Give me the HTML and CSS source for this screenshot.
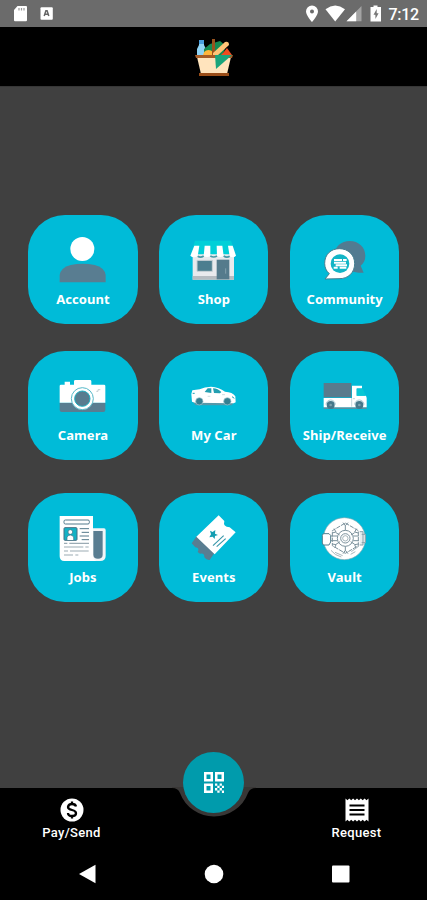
FILE: index.html
```html
<!DOCTYPE html>
<html lang="en">
<head>
<meta charset="utf-8">
<title>Home</title>
<link rel="stylesheet" href="styles.css">
</head>
<body>
<div class="phone">
  <div class="status">
    <svg class="status-left" viewBox="0 0 60 27">
      <path d="M17.5 6H26q1 0 1 1V20q0 1.3-1 1.3H15q-1 0-1-1V10z" fill="#fff"/>
      <path d="M19 8v2.5M21.5 8v2.5M24 8v2.5" stroke="#999" stroke-width="1.2"/>
      <rect x="40.5" y="7.3" width="12.3" height="12.4" rx="1" fill="#fff"/>
      <path d="M44.200 16l1.700-5.200h1.200l1.700 5.200M44.800 14.300h3.400" fill="none" stroke="#666" stroke-width="1.500"/>
    </svg>
    <div class="status-right">
      <svg class="status-icons" viewBox="0 0 80 27">
        <path fill-rule="evenodd" d="M7 5.5a6 6 0 0 0-6 6C1 15.500 7 22 7 22s6-6.500 6-10.500a6 6 0 0 0-6-6zm0 4a2 2 0 1 1 0 4 2 2 0 0 1 0-4z" fill="#fff"/>
        <path d="M20.500 9.200Q30.200 2 40 9.200L30.200 21.500z" fill="#fff"/>
        <path d="M56.500 6V21.300H41.500z" fill="#a3a3a3"/>
        <path d="M51.200 11.400V21.300H41.500z" fill="#fff"/>
        <path d="M68.500 5.500h4V7H76v14.500H65.500V7h3z" fill="#fff"/>
        <path d="M71.700 9l-3.200 5.800h1.900v4.200l3.200-5.800h-1.900z" fill="#777"/>
      </svg>
      <span class="clock">7:12</span>
    </div>
  </div>
  <header class="header">
    <svg class="basket" viewBox="0 0 40 40">
      <path d="M5 3h5v5l2 4v8H3v-8l2-4z" fill="#8fd3f5"/>
      <path d="M5 3h5v4H5z" fill="#4a9fe0"/>
      <path d="M10 12l6-5 10-3 6 5-4 11H10z" fill="#138a52"/>
      <path d="M9 20q0-7 5.500-7t6 7z" fill="#ffb63c"/>
      <path d="M18 2h3v17h-3z" fill="#98521e"/>
      <path d="M29 16l4-5 5 7H27z" fill="#ee4c20"/>
      <path d="M19 16L31 5q4-1 4 3L23 19h-4z" fill="#ffc477"/>
      <path d="M3 20h34l-4 17H7z" fill="#ffe4bd"/>
      <path d="M1 18h38l-1 3H2z" fill="#a65b26"/>
      <path d="M21 18h17L22 32z" fill="#19a47b"/>
      <path d="M5 36h30v3H5z" fill="#9a4d18"/>
    </svg>
  </header>
  <main class="main">
    <div class="row">
      <div class="tile">
        <svg class="icon" viewBox="115 84 150 156">
          <circle cx="188" cy="132" r="36" fill="#fff"/>
          <path d="M120 232v-22q3-22 33-30 36-7 72 0 30 8 33 30v22z" fill="#597d91"/>
        </svg>
        <span class="label">Account</span>
      </div>
      <div class="tile">
        <svg class="icon" viewBox="118 84 150 156">
          <path d="M136 107h108l15 46H122z" fill="#00d0d8"/>
          <path d="M129 148h124v76H129z" fill="#e9eaed"/>
          <path d="M129 213h124v11H129z" fill="#b6bcc1"/>
          <path d="M142 166h46v33h-46z" fill="#4c7e8f" stroke="#cad2d7" stroke-width="3"/>
          <path d="M201 164h38v59h-38z" fill="#557b8c"/>
          <path d="M228 190v16" stroke="#82a0ad" stroke-width="3"/>
          <path d="M134 122h15l-5 32q-14 6-22-2zM165 122h17v31q-10 6-20 0zM201 122h17l4 31q-10 6-20 0zM235 122h14l10 30q-8 8-19 2z" fill="#fff"/>
          <path d="M144 154q9 5 18-1M182 153q10 6 20 0M222 153q9 6 18 1" fill="none" stroke="#4799a7" stroke-width="5"/>
        </svg>
        <span class="label">Shop</span>
      </div>
      <div class="tile">
        <svg class="icon" viewBox="121 84 150 156">
          <path d="M210 108c27 0 47 19 47 44 0 14-5 22-14 30l9 21q-24 1-37-6-50-5-50-47c0-26 20-42 45-42z" fill="#527b91"/>
          <path d="M179 131c26 0 46 18 46 45 0 27-20 46-47 45l-42 1 13-16q-14-12-14-31c0-27 19-44 44-44z" fill="#fff" stroke="#467f91" stroke-width="3"/>
          <circle cx="181" cy="176" r="28" fill="#12b5c6"/>
          <path d="M163 165h24M190 165h11M163 173h36M168 181h34M162 188h12M180 188h20" stroke="#fff" stroke-width="6"/>
        </svg>
        <span class="label">Community</span>
      </div>
    </div>
    <div class="row">
      <div class="tile">
        <svg class="icon" viewBox="115 87 150 156">
          <path d="M135 125h16v10h-16zM163 124q0-4 4-4h44q4 0 4 4v11h-52z" fill="#fff"/>
          <path d="M120 188h137v22q0 6-6 6H126q-6 0-6-6z" fill="#597d91"/>
          <path d="M124 134h129q4 0 4 4v50H120v-50q0-4 4-4z" fill="#fff"/>
          <circle cx="188" cy="176" r="33" fill="#fff" stroke="#55b8c8" stroke-width="3"/>
          <circle cx="188" cy="176" r="23" fill="#587c8f" stroke="#1dafc1" stroke-width="3"/>
          <path d="M230 154h5v-5h7" fill="none" stroke="#c3cdd2" stroke-width="3"/>
        </svg>
        <span class="label">Camera</span>
      </div>
      <div class="tile">
        <svg class="icon" viewBox="508 87 150 156">
          <path d="M520 186h122l-5 10H528z" fill="#5698a9"/>
          <path d="M518 151l22-3q15-8 34-8 24 1 42 15 23 1 31 14l1 18-6 3-116-2-9-3-2-23z" fill="#fff"/>
          <path d="M555 156l9-11h11v14zM580 145q15 1 25 11l-4 4-18-1z" fill="#239fb1"/>
          <path d="M564 169h8M607 164h9" stroke="#b4ccd2" stroke-width="2"/>
          <circle cx="539" cy="184" r="11" fill="#367f91" stroke="#a6c9d1" stroke-width="2"/>
          <circle cx="623" cy="184" r="11" fill="#367f91" stroke="#a6c9d1" stroke-width="2"/>
          <path d="M519 160h6M637 170l7 5" stroke="#199fb3" stroke-width="3"/>
        </svg>
        <span class="label">My Car</span>
      </div>
      <div class="tile">
        <svg class="icon" viewBox="331 87 150 156">
          <path d="M342 129h83v43h-83z" fill="#597b8d"/>
          <path d="M342 202h129v5H342z" fill="#598fa0"/>
          <path d="M342 174h85v-37h30v8h-16v22h28l2 7v28H342z" fill="#fff"/>
          <path d="M441 147h19l8 20h-27z" fill="#08c7d4"/>
          <path d="M426 174v26M430 176h6" stroke="#a9c2cc" stroke-width="2"/>
          <path d="M349 194a14 14 0 0 1 28 0M435 194a14 14 0 0 1 28 0" fill="none" stroke="#a9cbd4" stroke-width="3"/>
          <circle cx="363" cy="195" r="12" fill="#46778a"/>
          <circle cx="449" cy="195" r="12" fill="#46778a"/>
          <circle cx="363" cy="195" r="4" fill="#7da0ad"/>
          <circle cx="449" cy="195" r="4" fill="#7da0ad"/>
        </svg>
        <span class="label">Ship/Receive</span>
      </div>
    </div>
    <div class="row row-last">
      <div class="tile">
        <svg class="icon" viewBox="115 77 150 156">
          <path d="M215 129h38q5 0 5 5v77q0 16-17 16h-26z" fill="#f2f5f7"/>
          <path d="M221 137h28v71q0 12-14 12t-14-12z" fill="#597d91"/>
          <path d="M120 92h100v121q0 9 10 14h-96q-14 0-14-14z" fill="#fff"/>
          <rect x="133" y="104" width="76" height="12" rx="4" fill="#fff" stroke="#537a8c" stroke-width="3"/>
          <rect x="133" y="127" width="39" height="38" rx="3" fill="#13b2c5" stroke="#466f83" stroke-width="3"/>
          <circle cx="152" cy="140" r="7" fill="#fff" stroke="#466f83" stroke-width="2"/>
          <path d="M142 164v-9q10-12 20 0v9" fill="#fff" stroke="#466f83" stroke-width="2"/>
          <path d="M180 130h28M186 141h22M180 152h28M186 163h22" stroke="#54798b" stroke-width="3"/>
          <path d="M133 174h10M149 174h59M133 185h58M197 185h10M133 197h12M151 197h56M133 209h27M167 209h9" stroke="#9babb4" stroke-width="3.500"/>
        </svg>
        <span class="label">Jobs</span>
      </div>
      <div class="tile">
        <svg class="icon" viewBox="118 77 150 156">
          <path d="M142 151l52 52-14 21q-9 2-16-8 1-14-13-11l-7-5q7-12-7-14l-11-12z" fill="#597d91"/>
          <path d="M207 90l17 17q-5 18 16 19l18 15-63 66-55-53z" fill="#fff"/>
          <path d="M181 136l8 4 8-6-1 11 9 4-9 3-1 9-6-7-10 2 5-9z" fill="#159eb2"/>
          <path d="M190 181l32-30M201 184l27-24" stroke="#3a98aa" stroke-width="3.500"/>
        </svg>
        <span class="label">Events</span>
      </div>
      <div class="tile">
        <svg class="icon" viewBox="121 77 150 156">
          <circle cx="194" cy="160" r="63" fill="#fff" stroke="#82a9b4" stroke-width="2"/>
          <path d="M131 145h17l5 5v20l-5 9h-17l-3-6v-23z" fill="#fff" stroke="#527f8f" stroke-width="3"/>
          <path d="M240 139h10v40h-10M246 147h11v25h-11" fill="#e6edef" stroke="#89a1aa" stroke-width="3"/>
          <g fill="none" stroke="#7b919c" stroke-width="3">
            <path d="M197 113l39 23v45l-39 23-39-23v-45z" stroke-dasharray="13 3"/>
            <path d="M190 112l7 9 8-9M190 205l7-10 8 10M163 130l6 10-12 3M231 130l-6 10 11 3M158 176l11 2-4 10M236 176l-11 2 4 10"/>
            <circle cx="197" cy="159" r="24"/>
            <circle cx="197" cy="159" r="14"/>
            <circle cx="197" cy="159" r="8" stroke-width="2"/>
            <path d="M197 121v14M197 183v12M169 142l11 7M225 142l-11 7M169 177l12-8M225 177l-12-8M153 152h20M153 166h20M221 152h16M221 166h16"/>
            <path d="M154 195q11 15 31 20M166 201l23 10M215 199l23-17M213 207l14-8" stroke="#a9b7bd"/>
          </g>
        </svg>
        <span class="label">Vault</span>
      </div>
    </div>
  </main>
  <footer class="footer">
    <svg class="notch" viewBox="0 0 427 112">
      <path d="M0 0H427V112H0z" fill="#000"/>
      <path d="M172 0Q178 0 180 5A36.300 36.300 0 0 0 248 5Q250 0 256 0V-1H172z" fill="#393736"/>
    </svg>
    <div class="fab">
      <svg class="qr" viewBox="0 0 20 21">
        <path fill-rule="evenodd" d="M0 0h9v9.500H0zM2.500 2.500v4.500h4v-4.500zM11 0h9v9.500h-9zM13.500 2.500v4.500h4v-4.500zM0 11.500h9V21H0zM2.500 14v4.500h4V14z" fill="#fff"/>
        <path d="M11 11.500h2.300v2.300H11zM15.600 11.500h2.300v2.300h-2.300zM13.300 13.800h2.300v2.300h-2.300zM17.900 13.800H20v2.300h-2.100zM11 16.100h2.300v2.300H11zM15.600 16.100h2.300v2.300h-2.300zM13.300 18.400h2.300v2.300h-2.300zM17.900 18.400H20V21h-2.100z" fill="#fff"/>
      </svg>
    </div>
    <div class="actions">
      <div class="action">
        <svg class="action-icon" viewBox="0 0 24 24">
          <circle cx="12" cy="12" r="11.500" fill="#fff"/>
          <path d="M16 8.500Q15.500 6 12 6T8 9q0 2.100 4 3t4 3.200q0 2.800-4 2.800t-4-3M12 3.500V6.500M12 17.500v3" fill="none" stroke="#000" stroke-width="2.300"/>
        </svg>
        <span>Pay/Send</span>
      </div>
      <div class="action">
        <svg class="action-icon" viewBox="0 0 24 24">
          <path d="M.5.500l1.900 1.800L4.300.500l1.900 1.800L8.100.500 10 2.300 12 .500l1.900 1.800L15.800.500l1.900 1.800L19.600.500l1.900 1.800L23.500.500v23l-2-1.800-1.900 1.800-1.900-1.800-1.900 1.800-1.900-1.800-1.900 1.800-2-1.800-1.900 1.800-1.900-1.800-1.900 1.800-1.900-1.800L.5 23.500z" fill="#fff"/>
          <path d="M4.500 7.500h15M4.500 12h15M4.500 16.500h15" stroke="#000" stroke-width="2"/>
        </svg>
        <span>Request</span>
      </div>
    </div>
    <div class="system">
      <svg viewBox="0 0 20 20"><path d="M18.500 .8v18.400L2 10z" fill="#fff"/></svg>
      <svg viewBox="0 0 20 20"><circle cx="10" cy="10" r="9.300" fill="#fff"/></svg>
      <svg viewBox="0 0 20 20"><rect x="2" y="1.500" width="17.500" height="17" rx="1" fill="#fff"/></svg>
    </div>
  </footer>
</div>
</body>
</html>
```
FILE: styles.css
```css
* { box-sizing: border-box; }
body { margin: 0; background: #404040; }
svg { display: block; flex: none; }
.phone {
  width: 427px;
  height: 900px;
  display: flex;
  flex-direction: column;
  overflow: hidden;
  background: #404040;
}
.status {
  height: 27px;
  display: flex;
  justify-content: space-between;
  background: #6b6b6b;
}
.status-left { width: 60px; height: 27px; }
.status-right { display: flex; align-items: center; width: 122px; }
.status-icons { width: 80px; height: 27px; }
.clock {
  margin-left: 3.500px;
  color: #fff;
  font: 500 16px/27px Roboto, sans-serif;
  letter-spacing: -0.300px;
  padding-top: 1px;
}
.header {
  height: 60px;
  display: flex;
  justify-content: center;
  padding-top: 10px;
  background: #000;
  border-bottom: 1px solid #363636;
}
.basket { width: 40px; height: 40px; }
.main {
  flex: 1;
  padding: 128px 27.700px 0 28.300px;
}
.row {
  display: flex;
  justify-content: space-between;
  margin-bottom: 27px;
}
.row-last { margin-top: 32.500px; }
.tile {
  width: 109.300px;
  height: 109px;
  padding-top: 18px;
  border-radius: 37px;
  background: #00bbd8;
  display: flex;
  flex-direction: column;
  align-items: center;
}
.icon { width: 50px; height: 52px; }
.label {
  margin-top: 5px;
  color: #fff;
  font: 700 13px/18px "Noto Sans", sans-serif;
  letter-spacing: 0.080px;
  white-space: nowrap;
}
.footer {
  position: relative;
  height: 112px;
}
.notch {
  position: absolute;
  inset: 0;
  width: 427px;
  height: 112px;
  overflow: visible;
}
.fab {
  position: absolute;
  left: 183.300px;
  top: -36.500px;
  width: 61px;
  height: 61px;
  border-radius: 50%;
  background: #009bac;
  display: flex;
  align-items: center;
  justify-content: center;
}
.qr { width: 20px; height: 21px; }
.actions {
  position: relative;
  display: flex;
  justify-content: space-between;
  padding: 9.500px 21px 0 22px;
}
.action {
  width: 99px;
  display: flex;
  flex-direction: column;
  align-items: center;
  gap: 2px;
  color: #fff;
  font: 500 13px/18px Roboto, sans-serif;
  letter-spacing: 0.300px;
}
.action-icon { width: 24px; height: 24px; }
.system {
  position: relative;
  display: flex;
  justify-content: space-between;
  padding: 22.500px 77px 0 77px;
}
.system svg { width: 20px; height: 20px; }
```
